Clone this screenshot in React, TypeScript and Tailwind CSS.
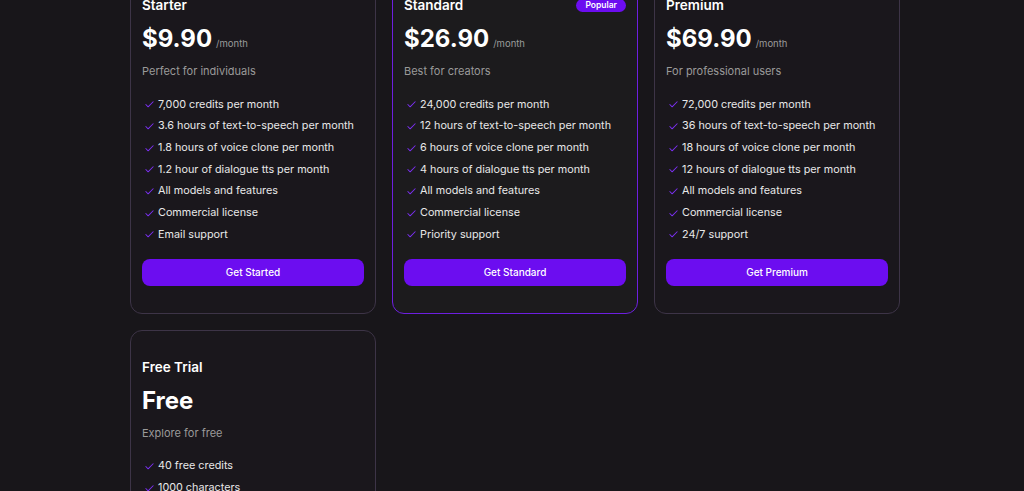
import React from 'react';
import { Check } from 'lucide-react';

type Plan = {
  name: string;
  price: string;
  period?: string;
  description: string;
  features: string[];
  cta: string;
  popular?: boolean;
};

const plans: Plan[] = [
  {
    name: 'Starter',
    price: '$9.90',
    period: '/month',
    description: 'Perfect for individuals',
    features: [
      '7,000 credits per month',
      '3.6 hours of text-to-speech per month',
      '1.8 hours of voice clone per month',
      '1.2 hour of dialogue tts per month',
      'All models and features',
      'Commercial license',
      'Email support',
    ],
    cta: 'Get Started',
  },
  {
    name: 'Standard',
    price: '$26.90',
    period: '/month',
    description: 'Best for creators',
    features: [
      '24,000 credits per month',
      '12 hours of text-to-speech per month',
      '6 hours of voice clone per month',
      '4 hours of dialogue tts per month',
      'All models and features',
      'Commercial license',
      'Priority support',
    ],
    cta: 'Get Standard',
    popular: true,
  },
  {
    name: 'Premium',
    price: '$69.90',
    period: '/month',
    description: 'For professional users',
    features: [
      '72,000 credits per month',
      '36 hours of text-to-speech per month',
      '18 hours of voice clone per month',
      '12 hours of dialogue tts per month',
      'All models and features',
      'Commercial license',
      '24/7 support',
    ],
    cta: 'Get Premium',
  },
  {
    name: 'Free Trial',
    price: 'Free',
    description: 'Explore for free',
    features: ['40 free credits', '1000 characters', 'Basic voices', 'Community support'],
    cta: 'Try for Free',
  },
];

const PlanCard: React.FC<{ plan: Plan }> = ({ plan }) => (
  <div
    className={`flex flex-col rounded-xl border px-[11px] pt-[26px] pb-[27px] ${
      plan.popular ? 'border-[#6d1fe0] bg-[#1c1b1d]' : 'border-[#3d3447] bg-[#1a171c]'
    }`}
  >
    <div className="flex h-5 items-center justify-between">
      <h3 className="text-[13.5px] font-semibold leading-5 text-white">{plan.name}</h3>
      {plan.popular && (
        <span className="rounded-full bg-[#6c0df0] px-[9px] py-px text-[8.5px] font-semibold leading-[11px] text-white">
          Popular
        </span>
      )}
    </div>
    <div className="mt-1.5 flex h-9 items-baseline">
      <span className="text-[24px] font-bold leading-9 text-white">{plan.price}</span>
      {plan.period && <span className="ml-1 text-[9.5px] text-[#9b9b9b]">{plan.period}</span>}
    </div>
    <p className="mt-[6px] text-[11px] leading-4 text-[#9a9a9a]">{plan.description}</p>
    <ul className="mt-[15px] flex flex-col">
      {plan.features.map((f) => (
        <li
          key={f}
          className="flex h-[21.67px] items-center whitespace-nowrap text-[10.8px] text-[#e8e8e8]"
        >
          <Check size={11} strokeWidth={2.2} className="mr-[3px] ml-[2px] text-[#7a2ff0]" />
          {f}
        </li>
      ))}
    </ul>
    <button className="mt-[13px] h-[27px] w-full rounded-lg bg-[#6c0df0] text-[10px] font-medium text-white">
      {plan.cta}
    </button>
  </div>
);

export default function App() {
  return (
    <div
      className="min-h-screen overflow-hidden bg-[#18161a]"
      style={{ fontFamily: 'Inter, "Noto Sans", sans-serif' }}
    >
      <div className="mt-[-32px] ml-[130px] grid w-[770px] grid-cols-3 gap-x-4 gap-y-4">
        {plans.map((p) => (
          <PlanCard key={p.name} plan={p} />
        ))}
      </div>
    </div>
  );
}
